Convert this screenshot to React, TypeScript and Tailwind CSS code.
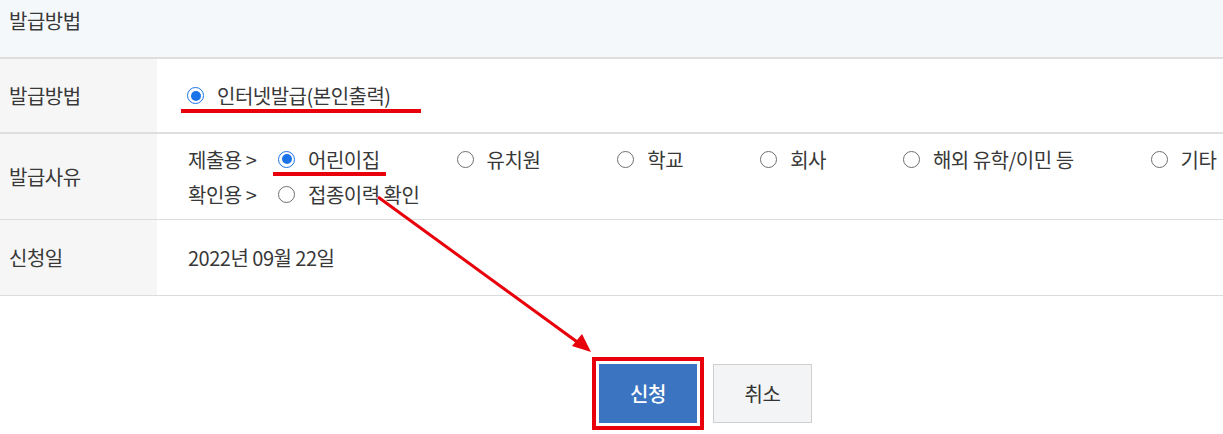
import React from 'react';

const font = { fontFamily: '"Noto Sans CJK KR", "Noto Sans", sans-serif' };

function Radio({ checked = false }: { checked?: boolean }) {
  return checked ? (
    <span className="flex h-[17px] w-[17px] shrink-0 items-center justify-center rounded-full border-[1.5px] border-[#1a73e8] bg-white">
      <span className="h-[10px] w-[10px] rounded-full bg-[#1a73e8]" />
    </span>
  ) : (
    <span className="h-[17px] w-[17px] shrink-0 rounded-full border border-[#6f6f6f] bg-white" />
  );
}

function Option({ label, checked = false, mark = false }: { label: string; checked?: boolean; mark?: boolean }) {
  return (
    <span className="relative flex items-center gap-[13px]">
      <Radio checked={checked} />
      <span>{label}</span>
      {mark && <span className="absolute -left-[5px] -right-[6px] top-[26px] h-[4px] bg-[#e8000b]" />}
    </span>
  );
}

const submitReasons = ['유치원', '학교', '회사', '해외 유학/이민 등', '기타'];

export default function App() {
  return (
    <div className="relative h-[434px] w-[1223px] overflow-hidden bg-white text-[20px] tracking-[-0.5px] text-[#383838]" style={font}>
      <div className="h-[59px] border-b-2 border-[#dedede] bg-[#f5f8fb] pl-[9px] pt-[7px] leading-[28px]">발급방법</div>

      <div className="flex h-[75px] border-b-2 border-[#dedede]">
        <div className="flex w-[157px] items-center bg-[#f6f6f6] pl-[9px]">발급방법</div>
        <div className="flex items-center pl-[30px]">
          <span className="relative flex items-center gap-[13px]">
            <Radio checked />
            <span>인터넷발급(본인출력)</span>
            <span className="absolute -left-[6px] -right-[30px] top-[28px] h-[4px] bg-[#e8000b]" />
          </span>
        </div>
      </div>

      <div className="flex h-[86px] border-b border-[#dcdcdc]">
        <div className="flex w-[157px] items-center bg-[#f6f6f6] pl-[9px]">발급사유</div>
        <div className="flex flex-col justify-center gap-[8px] pl-[31px] leading-[27px]">
          <div className="flex items-center">
            <span className="w-[90px]">제출용 &gt;</span>
            <span className="flex items-center gap-[77px]">
              <Option label="어린이집" checked mark />
              {submitReasons.map((r) => (
                <Option key={r} label={r} />
              ))}
            </span>
          </div>
          <div className="flex items-center">
            <span className="w-[90px]">확인용 &gt;</span>
            <Option label="접종이력 확인" />
          </div>
        </div>
      </div>

      <div className="flex h-[76px] border-b border-[#dcdcdc]">
        <div className="flex w-[157px] items-center bg-[#f6f6f6] pl-[9px]">신청일</div>
        <div className="flex items-center pl-[31px]">2022년 09월 22일</div>
      </div>

      <div className="flex gap-[9px] pl-[592px] pt-[61px]">
        <div className="border-4 border-[#e8000b] p-[3px]">
          <button className="h-[59px] w-[98px] bg-[#3b74c0] text-[20px] font-medium text-white">신청</button>
        </div>
        <button className="mt-[7px] h-[59px] w-[99px] border border-[#cfcfcf] bg-[#f3f4f6] text-[20px] text-[#333]">취소</button>
      </div>

      <svg className="pointer-events-none absolute left-0 top-0" width="1223" height="434">
        <line x1="378" y1="197" x2="580" y2="344" stroke="#e8000b" strokeWidth="3" />
        <polygon points="591,352 572,346 582,334" fill="#e8000b" />
      </svg>
    </div>
  );
}
